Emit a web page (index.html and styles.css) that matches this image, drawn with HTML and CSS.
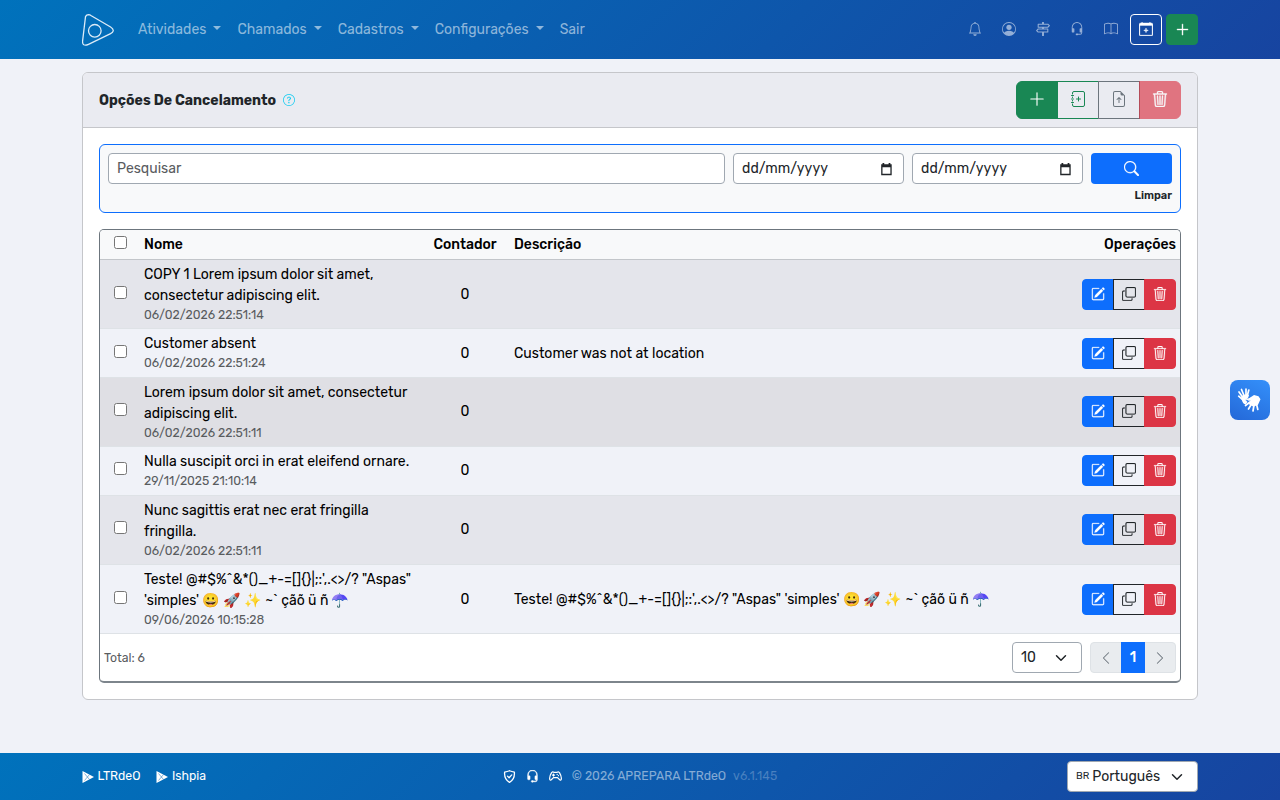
FILE: index.html
```html
<!DOCTYPE html>
<html lang="pt-BR">
<head>
    <meta charset="UTF-8">
    <meta name="viewport" content="width=device-width, initial-scale=1.0">
    <title>Opções De Cancelamento</title>
    <link rel="stylesheet" href="styles.css">
</head>
<body>
    <svg class="sprite" xmlns="http://www.w3.org/2000/svg">
        <symbol id="bell" viewBox="0 0 16 16"><path d="M8 16a2 2 0 0 0 2-2H6a2 2 0 0 0 2 2M8 1.918l-.797.161A4 4 0 0 0 4 6c0 .628-.134 2.197-.459 3.742-.16.767-.376 1.566-.663 2.258h10.244c-.287-.692-.502-1.49-.663-2.258C12.134 8.197 12 6.628 12 6a4 4 0 0 0-3.203-3.92zM14.22 12c.223.447.481.801.78 1H1c.299-.199.557-.553.78-1C2.68 10.2 3 6.88 3 6c0-2.42 1.72-4.44 4.005-4.901a1 1 0 1 1 1.99 0A5 5 0 0 1 13 6c0 .88.32 4.2 1.22 6"/></symbol>
        <symbol id="person" viewBox="0 0 16 16"><path d="M11 6a3 3 0 1 1-6 0 3 3 0 0 1 6 0"/><path fill-rule="evenodd" d="M0 8a8 8 0 1 1 16 0A8 8 0 0 1 0 8m8-7a7 7 0 0 0-5.468 11.37C3.242 11.226 4.805 10 8 10s4.757 1.225 5.468 2.37A7 7 0 0 0 8 1"/></symbol>
        <symbol id="signpost" viewBox="0 0 16 16"><path fill="none" stroke="currentColor" stroke-width="1.2" stroke-linejoin="round" d="M7.5 2.5V.5h1v2M2.5 2.5h11l1.8 1.75-1.8 1.75h-11zM13.5 8h-11L.7 9.75l1.8 1.75h11zM7.5 6v2M8.5 6v2M7.5 11.5v4h1v-4"/></symbol>
        <symbol id="headset" viewBox="0 0 16 16"><path d="M8 1a5 5 0 0 0-5 5v1h1a1 1 0 0 1 1 1v3a1 1 0 0 1-1 1H3a1 1 0 0 1-1-1V6a6 6 0 1 1 12 0v6a2.5 2.5 0 0 1-2.5 2.5H9.366a1 1 0 0 1-.866.5h-1a1 1 0 1 1 0-2h1a1 1 0 0 1 .866.5H11.5A1.5 1.5 0 0 0 13 12h-1a1 1 0 0 1-1-1V8a1 1 0 0 1 1-1h1V6a5 5 0 0 0-5-5"/></symbol>
        <symbol id="book" viewBox="0 0 16 16"><path d="M1 2.828c.885-.37 2.154-.769 3.388-.893 1.33-.134 2.458.063 3.112.752v9.746c-.935-.53-2.12-.603-3.213-.493-1.18.12-2.37.461-3.287.811zm7.5-.141c.654-.689 1.782-.886 3.112-.752 1.234.124 2.503.523 3.388.893v9.923c-.918-.35-2.107-.692-3.287-.81-1.094-.111-2.278-.039-3.213.492zM8 1.783C7.015.936 5.587.81 4.287.94c-1.514.153-3.042.672-3.994 1.105A.5.5 0 0 0 0 2.5v11a.5.5 0 0 0 .707.455c.882-.4 2.303-.881 3.68-1.02 1.409-.142 2.59.087 3.223.877a.5.5 0 0 0 .78 0c.633-.79 1.814-1.019 3.222-.877 1.378.139 2.8.62 3.681 1.02A.5.5 0 0 0 16 13.5v-11a.5.5 0 0 0-.293-.455c-.952-.433-2.48-.952-3.994-1.105C10.413.809 8.985.936 8 1.783"/></symbol>
        <symbol id="calendar-plus" viewBox="0 0 16 16"><path d="M8 7a.5.5 0 0 1 .5.5V9H10a.5.5 0 0 1 0 1H8.5v1.5a.5.5 0 0 1-1 0V10H6a.5.5 0 0 1 0-1h1.5V7.5A.5.5 0 0 1 8 7"/><path d="M3.5 0a.5.5 0 0 1 .5.5V1h8V.5a.5.5 0 0 1 1 0V1h1a2 2 0 0 1 2 2v11a2 2 0 0 1-2 2H2a2 2 0 0 1-2-2V3a2 2 0 0 1 2-2h1V.5a.5.5 0 0 1 .5-.5M1 4v10a1 1 0 0 0 1 1h12a1 1 0 0 0 1-1V4z"/></symbol>
        <symbol id="plus" viewBox="0 0 16 16"><path d="M8 2a.5.5 0 0 1 .5.5v5h5a.5.5 0 0 1 0 1h-5v5a.5.5 0 0 1-1 0v-5h-5a.5.5 0 0 1 0-1h5v-5A.5.5 0 0 1 8 2"/></symbol>
        <symbol id="journal-plus" viewBox="0 0 16 16"><path fill="none" stroke="currentColor" stroke-linecap="round" d="M2.5 3V2A1.5 1.5 0 0 1 4 .5h9A1.5 1.5 0 0 1 14.500 2v12a1.500 1.500 0 0 1-1.500 1.500H4A1.500 1.500 0 0 1 2.500 14v-1M1.500 4.500h2M1.500 8h2M1.500 11.500h2M2.500 6v.5M2.500 9.500v.5M8.500 6v4M6.500 8h4"/></symbol>
        <symbol id="file-up" viewBox="0 0 16 16"><path d="M8.500 11.500a.5.5 0 0 1-1 0V7.707L6.354 8.854a.5.5 0 1 1-.708-.708l2-2a.5.5 0 0 1 .708 0l2 2a.5.5 0 0 1-.708.708L8.500 7.707z"/><path d="M14 14V4.500L9.500 0H4a2 2 0 0 0-2 2v12a2 2 0 0 0 2 2h8a2 2 0 0 0 2-2M9.500 3A1.500 1.500 0 0 0 11 4.500h2V14a1 1 0 0 1-1 1H4a1 1 0 0 1-1-1V2a1 1 0 0 1 1-1h5.500z"/></symbol>
        <symbol id="trash" viewBox="0 0 16 16"><path d="M6.5 1h3a.5.5 0 0 1 .5.5v1H6v-1a.5.5 0 0 1 .5-.5M11 2.5v-1A1.5 1.5 0 0 0 9.5 0h-3A1.5 1.5 0 0 0 5 1.500v1H1.5a.5.5 0 0 0 0 1h.538l.853 10.660A2 2 0 0 0 4.885 16h6.230a2 2 0 0 0 1.994-1.840l.853-10.660h.538a.5.5 0 0 0 0-1zm1.958 1-.846 10.580a1 1 0 0 1-.997.920h-6.230a1 1 0 0 1-.997-.920L3.042 3.500zm-7.487 1a.5.5 0 0 1 .528.470l.5 8.500a.5.5 0 0 1-.998.060L5 5.030a.5.5 0 0 1 .470-.530Zm5.058 0a.5.5 0 0 1 .470.530l-.5 8.500a.5.5 0 1 1-.998-.060l.5-8.500a.5.5 0 0 1 .528-.470M8 4.500a.5.5 0 0 1 .5.5v8.500a.5.5 0 0 1-1 0V5a.5.5 0 0 1 .5-.5"/></symbol>
        <symbol id="edit" viewBox="0 0 16 16"><path d="M15.502 1.940a.5.5 0 0 1 0 .706L14.459 3.690l-2-2L13.502.646a.5.5 0 0 1 .707 0l1.293 1.293zm-1.750 2.456-2-2L4.939 9.210a.5.5 0 0 0-.121.196l-.805 2.414a.25.25 0 0 0 .316.316l2.414-.805a.5.5 0 0 0 .196-.120l6.813-6.814z"/><path fill-rule="evenodd" d="M1 13.500A1.500 1.500 0 0 0 2.500 15h11a1.500 1.500 0 0 0 1.500-1.500v-6a.5.5 0 0 0-1 0v6a.5.5 0 0 1-.5.5h-11a.5.5 0 0 1-.5-.5v-11a.5.5 0 0 1 .5-.5H9a.5.5 0 0 0 0-1H2.500A1.500 1.500 0 0 0 1 2.500z"/></symbol>
        <symbol id="copy" viewBox="0 0 16 16"><path fill-rule="evenodd" d="M4 2a2 2 0 0 1 2-2h8a2 2 0 0 1 2 2v8a2 2 0 0 1-2 2H6a2 2 0 0 1-2-2zm2-1a1 1 0 0 0-1 1v8a1 1 0 0 0 1 1h8a1 1 0 0 0 1-1V2a1 1 0 0 0-1-1zM2 5a1 1 0 0 0-1 1v8a1 1 0 0 0 1 1h8a1 1 0 0 0 1-1v-1h1v1a2 2 0 0 1-2 2H2a2 2 0 0 1-2-2V6a2 2 0 0 1 2-2h1v1z"/></symbol>
        <symbol id="search" viewBox="0 0 16 16"><path d="M11.742 10.344a6.5 6.5 0 1 0-1.397 1.398h-.001q.044.06.098.115l3.850 3.850a1 1 0 0 0 1.415-1.414l-3.850-3.850a1 1 0 0 0-.115-.1zM12 6.500a5.500 5.500 0 1 1-11 0 5.500 5.500 0 0 1 11 0"/></symbol>
        <symbol id="question" viewBox="0 0 16 16"><path d="M8 15A7 7 0 1 1 8 1a7 7 0 0 1 0 14m0 1A8 8 0 1 0 8 0a8 8 0 0 0 0 16"/><path d="M5.255 5.786a.237.237 0 0 0 .241.247h.825c.138 0 .248-.113.266-.25.09-.656.54-1.134 1.342-1.134.686 0 1.314.343 1.314 1.168 0 .635-.374.927-.965 1.371-.673.489-1.206 1.06-1.168 1.987l.003.217a.25.25 0 0 0 .25.246h.811a.25.25 0 0 0 .25-.25v-.105c0-.718.273-.927 1.01-1.486.609-.463 1.244-.977 1.244-2.056 0-1.511-1.276-2.241-2.673-2.241-1.267 0-2.655.59-2.75 2.286m1.557 5.763c0 .533.425.927 1.01.927.609 0 1.028-.394 1.028-.927 0-.552-.42-.94-1.029-.94-.584 0-1.009.388-1.009.94"/></symbol>
        <symbol id="date" viewBox="0 0 16 16"><path fill-rule="evenodd" d="M4 1h2v1.500h5V1h2v1.500h1.500V15H2.500V2.500H4zM4 6v7.500h9V6z"/></symbol>
        <symbol id="down" viewBox="0 0 16 16"><path fill="none" stroke="currentColor" stroke-width="2" stroke-linecap="round" stroke-linejoin="round" d="m2 5 6 6 6-6"/></symbol>
        <symbol id="left" viewBox="0 0 16 16"><path fill="none" stroke="currentColor" stroke-width="1.2" stroke-linecap="round" stroke-linejoin="round" d="m11 2-6 6 6 6"/></symbol>
        <symbol id="right" viewBox="0 0 16 16"><path fill="none" stroke="currentColor" stroke-width="1.2" stroke-linecap="round" stroke-linejoin="round" d="m5 2 6 6-6 6"/></symbol>
        <symbol id="play" viewBox="0 0 12 12"><path d="M.5 0 12 6 .5 12z"/><path class="play-cut" d="m2.500 2.500 5 6M2.500 9.500l5-6"/></symbol>
        <symbol id="shield" viewBox="0 0 16 16"><path fill="none" stroke="currentColor" stroke-width="1.600" stroke-linecap="round" stroke-linejoin="round" d="M8 .9c2 .9 4 1.400 6 1.700C14.500 8.500 12 13 8 15.200 4 13 1.500 8.500 2 2.600 4 2.300 6 1.800 8 .9M5.500 7.500l2 2 3.300-3.500"/></symbol>
        <symbol id="gamepad" viewBox="0 0 16 16"><path fill="none" stroke="currentColor" stroke-width="1.500" stroke-linecap="round" stroke-linejoin="round" d="M3 3.500C4 2 5 2 6 2.800h4c1-.8 2-.8 3 .7 1.500 2.500 2.500 6.500 2 8.200-.6 1.300-2 .8-4.500-2.200h-5C3 12.500 1.600 13 1 11.700c-.5-1.700.5-5.700 2-8.200M5.500 5v2.500M4.300 6.200h2.500M10 5.500h.1M11.500 7h.1"/></symbol>
    </svg>

    <header class="navbar">
        <div class="container navbar-inner">
            <svg class="logo" viewBox="0 0 32 32"><path d="M3.500 2.600Q4.500.8 6.500.7q1.400 0 2.800 1L28.600 13q3 1.900 2.600 4-.3 1.500-2.600 2.600L6.500 30.300q-3 1.400-4.700.5-1.500-.9-1.200-3.800z"/><circle cx="12.800" cy="16.800" r="6.300"/></svg>
            <nav class="menu">
                <a class="menu-link" href="#">Atividades<i class="caret"></i></a>
                <a class="menu-link" href="#">Chamados<i class="caret"></i></a>
                <a class="menu-link" href="#">Cadastros<i class="caret"></i></a>
                <a class="menu-link" href="#">Configurações<i class="caret"></i></a>
                <a class="menu-link" href="#">Sair</a>
            </nav>
            <div class="shortcuts">
                <svg class="icon"><use href="#bell"/></svg>
                <svg class="icon"><use href="#person"/></svg>
                <svg class="icon"><use href="#signpost"/></svg>
                <svg class="icon"><use href="#headset"/></svg>
                <svg class="icon"><use href="#book"/></svg>
            </div>
            <div class="quick">
                <button class="quick-btn quick-outline"><svg class="icon"><use href="#calendar-plus"/></svg></button>
                <button class="quick-btn quick-success"><svg class="icon icon-15"><use href="#plus"/></svg></button>
            </div>
        </div>
    </header>

    <main class="container card">
        <div class="card-header">
            <h1 class="title">Opções De Cancelamento</h1>
            <svg class="icon help"><use href="#question"/></svg>
            <div class="toolbar">
                <button class="tool tool-add"><svg class="icon icon-18"><use href="#plus"/></svg></button>
                <button class="tool tool-journal"><svg class="icon icon-16"><use href="#journal-plus"/></svg></button>
                <button class="tool tool-file"><svg class="icon icon-16"><use href="#file-up"/></svg></button>
                <button class="tool tool-delete"><svg class="icon icon-16"><use href="#trash"/></svg></button>
            </div>
        </div>
        <div class="card-body">
            <form class="filter">
                <div class="filter-row">
                    <input class="field search-field" type="text" placeholder="Pesquisar">
                    <div class="field date-field"><span>dd/mm/yyyy</span><svg class="icon"><use href="#date"/></svg></div>
                    <div class="field date-field"><span>dd/mm/yyyy</span><svg class="icon"><use href="#date"/></svg></div>
                    <button class="search-btn" type="button"><svg class="icon icon-15"><use href="#search"/></svg></button>
                </div>
                <a class="clear" href="#">Limpar</a>
            </form>

            <div class="table-box">
                <table class="table">
                    <thead>
                        <tr>
                            <th class="col-check"><input type="checkbox"></th>
                            <th class="col-name">Nome</th>
                            <th class="col-count">Contador</th>
                            <th>Descrição</th>
                            <th class="col-ops">Operações</th>
                        </tr>
                    </thead>
                    <tbody>
                        <tr>
                            <td class="col-check"><input type="checkbox"></td>
                            <td>COPY 1 Lorem ipsum dolor sit amet,<br>consectetur adipiscing elit.<small>06/02/2026 22:51:14</small></td>
                            <td class="col-count">0</td>
                            <td></td>
                            <td class="col-ops"><div class="ops"><button class="op op-edit"><svg class="icon"><use href="#edit"/></svg></button><button class="op op-copy"><svg class="icon"><use href="#copy"/></svg></button><button class="op op-delete"><svg class="icon"><use href="#trash"/></svg></button></div></td>
                        </tr>
                        <tr>
                            <td class="col-check"><input type="checkbox"></td>
                            <td>Customer absent<small>06/02/2026 22:51:24</small></td>
                            <td class="col-count">0</td>
                            <td>Customer was not at location</td>
                            <td class="col-ops"><div class="ops"><button class="op op-edit"><svg class="icon"><use href="#edit"/></svg></button><button class="op op-copy"><svg class="icon"><use href="#copy"/></svg></button><button class="op op-delete"><svg class="icon"><use href="#trash"/></svg></button></div></td>
                        </tr>
                        <tr class="hover">
                            <td class="col-check"><input type="checkbox"></td>
                            <td>Lorem ipsum dolor sit amet, consectetur<br>adipiscing elit.<small>06/02/2026 22:51:11</small></td>
                            <td class="col-count">0</td>
                            <td></td>
                            <td class="col-ops"><div class="ops"><button class="op op-edit"><svg class="icon"><use href="#edit"/></svg></button><button class="op op-copy"><svg class="icon"><use href="#copy"/></svg></button><button class="op op-delete"><svg class="icon"><use href="#trash"/></svg></button></div></td>
                        </tr>
                        <tr>
                            <td class="col-check"><input type="checkbox"></td>
                            <td>Nulla suscipit orci in erat eleifend ornare.<small>29/11/2025 21:10:14</small></td>
                            <td class="col-count">0</td>
                            <td></td>
                            <td class="col-ops"><div class="ops"><button class="op op-edit"><svg class="icon"><use href="#edit"/></svg></button><button class="op op-copy"><svg class="icon"><use href="#copy"/></svg></button><button class="op op-delete"><svg class="icon"><use href="#trash"/></svg></button></div></td>
                        </tr>
                        <tr>
                            <td class="col-check"><input type="checkbox"></td>
                            <td>Nunc sagittis erat nec erat fringilla<br>fringilla.<small>06/02/2026 22:51:11</small></td>
                            <td class="col-count">0</td>
                            <td></td>
                            <td class="col-ops"><div class="ops"><button class="op op-edit"><svg class="icon"><use href="#edit"/></svg></button><button class="op op-copy"><svg class="icon"><use href="#copy"/></svg></button><button class="op op-delete"><svg class="icon"><use href="#trash"/></svg></button></div></td>
                        </tr>
                        <tr>
                            <td class="col-check"><input type="checkbox"></td>
                            <td>Teste! @#$%^&amp;*()_+-=[]{}|;:',.&lt;&gt;/? "Aspas"<br>'simples' 😀 🚀 ✨ ~` çãõ ü ñ ☂️<small>09/06/2026 10:15:28</small></td>
                            <td class="col-count">0</td>
                            <td>Teste! @#$%^&amp;*()_+-=[]{}|;:',.&lt;&gt;/? "Aspas" 'simples' 😀 🚀 ✨ ~` çãõ ü ñ ☂️</td>
                            <td class="col-ops"><div class="ops"><button class="op op-edit"><svg class="icon"><use href="#edit"/></svg></button><button class="op op-copy"><svg class="icon"><use href="#copy"/></svg></button><button class="op op-delete"><svg class="icon"><use href="#trash"/></svg></button></div></td>
                        </tr>
                    </tbody>
                </table>
                <div class="table-footer">
                    <span class="total">Total: 6</span>
                    <div class="select page-size">10<svg class="icon icon-12"><use href="#down"/></svg></div>
                    <div class="pager">
                        <span class="page"><svg class="icon"><use href="#left"/></svg></span>
                        <span class="page page-active">1</span>
                        <span class="page"><svg class="icon"><use href="#right"/></svg></span>
                    </div>
                </div>
            </div>
        </div>
    </main>

    <footer class="footer">
        <div class="container footer-inner">
            <div class="brands">
                <a class="brand" href="#"><svg class="icon icon-12"><use href="#play"/></svg>LTRdeO</a>
                <a class="brand" href="#"><svg class="icon icon-12"><use href="#play"/></svg>Ishpia</a>
            </div>
            <div class="legal">
                <svg class="icon icon-13"><use href="#shield"/></svg>
                <svg class="icon icon-13 bold"><use href="#headset"/></svg>
                <svg class="icon icon-13"><use href="#gamepad"/></svg>
                <span class="copyright">© 2026 APREPARA LTRdeO</span>
                <span class="version">v6.1.145</span>
            </div>
            <div class="select language"><span class="flag">BR</span>Português<svg class="icon icon-12"><use href="#down"/></svg></div>
        </div>
    </footer>

    <div class="vlibras">
        <svg viewBox="0 0 40 40">
            <g fill="none" stroke="#fff" stroke-linecap="round">
                <path stroke-width="1.700" d="M12.500 17 9 12M14 15.500 11.500 9.500M16 14.500V9M17.500 15l1.300-5M12 19l-3.300-2.800"/>
                <path stroke-width="1.700" d="m20 22-4.500 3.500M21.500 24 18.500 29M24 25l-1 6M26.500 24l1.300 5.500M21 18.500l-4 1"/>
            </g>
            <path fill="#fff" d="m11.500 16 6-2.500 1.500 2-1 2.500-2.500 2 2 2-2 2.500c-3-1-4-4-4-8.500M19.500 18l4.500-3 4.500 1.200 2 3-2.500 5.500-4.500 2-5-2.700 2-3.500-2.500.5z"/>
        </svg>
    </div>
</body>
</html>
```
FILE: styles.css
```css
* {
    box-sizing: border-box;
}
body {
    margin: 0;
    height: 100vh;
    display: flex;
    flex-direction: column;
    overflow: hidden;
    font-family: Rubik, Roboto, "Noto Color Emoji", sans-serif;
    font-size: 14px;
    line-height: 1.5;
    color: #212529;
    background: #f0f2f8;
}
button, input {
    font: inherit;
}
a {
    color: inherit;
    text-decoration: none;
}
.sprite {
    display: none;
}
.container {
    width: 1116px;
    margin: 0 auto;
}
.icon {
    display: block;
    width: 14px;
    height: 14px;
    fill: currentColor;
}
.icon-12 {
    width: 12px;
    height: 12px;
}
.icon-13 {
    width: 13px;
    height: 13px;
}
.icon-15 {
    width: 15px;
    height: 15px;
}
.icon-16 {
    width: 16px;
    height: 16px;
}
.icon-18 {
    width: 18px;
    height: 18px;
}

/* top bar */
.navbar {
    flex: none;
    height: 59px;
    background: linear-gradient(135deg, #0072bc, #1744a0);
}
.navbar-inner {
    display: flex;
    align-items: center;
    height: 59px;
}
.logo {
    width: 32px;
    height: 32px;
    margin-right: 16px;
    fill: none;
    stroke: #dcebf7;
    stroke-width: 1.3;
}
.menu {
    display: flex;
}
.menu-link {
    display: flex;
    align-items: center;
    padding: 0 8px;
    color: rgba(255, 255, 255, 0.55);
}
.caret {
    margin: -3px 0 0 7px;
    border-top: 4px solid;
    border-left: 4px solid transparent;
    border-right: 4px solid transparent;
}
.shortcuts {
    display: flex;
    gap: 20px;
    margin: -2px 12px 0 auto;
    color: rgba(255, 255, 255, 0.55);
}
.op .icon {
    stroke: currentColor;
    stroke-width: 0.25;
}
.quick {
    display: flex;
    gap: 4px;
}
.quick-btn {
    display: flex;
    align-items: center;
    justify-content: center;
    width: 32px;
    height: 31px;
    padding: 0 0 1px;
    border: 1px solid #fff;
    border-radius: 4px;
    color: #fff;
    background: none;
}
.quick-btn .icon {
    stroke: currentColor;
    stroke-width: 0.4;
}
.quick-success {
    border-color: #198754;
    background: #198754;
}

/* card */
.card {
    margin-top: 13px;
    height: 628px;
    background: #fff;
    border: 1px solid #c5c6ca;
    border-radius: 6px;
}
.card-header {
    display: flex;
    align-items: center;
    height: 55px;
    padding: 0 16px;
    background: #eaebf1;
    border-bottom: 1px solid #c5c6ca;
    border-radius: 5px 5px 0 0;
}
.title {
    margin: 0;
    font-size: 14px;
    font-weight: 700;
}
.help {
    width: 12px;
    height: 12px;
    margin-left: 7px;
    color: #0dcaf0;
}
.toolbar {
    display: flex;
    margin-left: auto;
}
.tool {
    display: flex;
    align-items: center;
    justify-content: center;
    width: 42px;
    height: 38px;
    margin-left: -1px;
    padding: 0 0 2px;
    border: 1px solid #198754;
    background: none;
}
.tool-add {
    margin-left: 0;
    border-radius: 6px 0 0 6px;
    background: #198754;
    color: #fff;
}
.tool-journal {
    color: #198754;
}
.tool-file {
    color: #6c757d;
    border-color: #6c757d;
}
.tool-delete {
    border-color: #dc3545;
    border-radius: 0 6px 6px 0;
    background: #dc3545;
    color: #fff;
    opacity: 0.65;
}
.tool-delete .icon {
    stroke: #fff;
    stroke-width: 0.4;
}
.card-body {
    padding: 16px;
}

/* filter */
.filter {
    height: 69px;
    padding: 8px;
    border: 1px solid #0d6efd;
    border-radius: 6px;
    background: #f8f9fa;
}
.filter-row {
    display: flex;
    gap: 8px;
}
.field {
    height: 31px;
    padding: 0 8px;
    border: 1px solid #a0a8b1;
    border-radius: 4px;
    background: #fff;
    color: #212529;
}
.search-field {
    flex: 1;
    min-width: 0;
}
.search-field::placeholder {
    color: #595c5f;
}
.date-field {
    display: flex;
    align-items: center;
    justify-content: space-between;
    width: 171px;
    padding-right: 10px;
    letter-spacing: 0.1px;
}
.search-btn {
    display: flex;
    align-items: center;
    justify-content: center;
    width: 81px;
    height: 31px;
    padding: 0 0 1px;
    border: 0;
    border-radius: 4px;
    background: #0d6efd;
    color: #fff;
}
.search-btn .icon {
    stroke: #fff;
    stroke-width: 0.3;
}
.clear {
    display: block;
    margin-top: 4px;
    text-align: right;
    font-size: 11px;
    font-weight: 600;
}

/* table */
.table-box {
    height: 454px;
    margin-top: 16px;
    border: 1px solid #6c757d;
    border-bottom: 2px solid #7d858c;
    border-radius: 5px;
    overflow: hidden;
}
.table {
    width: 100%;
    table-layout: fixed;
    border-collapse: separate;
    border-spacing: 0;
    color: #000;
    white-space: nowrap;
}
.table th, .table td {
    padding: 4px;
    text-align: left;
    vertical-align: middle;
    border-bottom: 1px solid #dee2e6;
}
.table th {
    height: 30px;
    font-weight: 500;
    background: #f8f9fa;
    border-bottom-color: #c3c6ca;
}
.table td {
    background: #f0f2f8;
}
.table tbody tr:nth-child(odd) td {
    background: #e4e5eb;
}
.table tbody tr.hover td {
    background: #dfdfe4;
}
.table small {
    display: block;
    font-size: 12.25px;
    color: #595c5f;
}
.table .col-check {
    width: 40px;
    text-align: center;
    line-height: 1;
}
.col-check input {
    display: block;
    width: 13px;
    height: 13px;
    margin: -4px auto 0;
}
.col-name {
    width: 280px;
}
.table .col-count {
    width: 90px;
    text-align: center;
}
.table .col-ops {
    width: 110px;
    text-align: right;
}
.ops {
    display: flex;
    justify-content: flex-end;
}
.op {
    display: flex;
    justify-content: center;
    width: 32px;
    height: 31px;
    padding: 7px 0 0;
    border: 1px solid #0d6efd;
    border-radius: 4px 0 0 4px;
    background: #0d6efd;
    color: #fff;
}
.op-copy {
    margin-left: -1px;
    border-color: #212529;
    border-radius: 0;
    background: none;
    color: #212529;
}
.op-delete {
    margin-left: -1px;
    border-color: #dc3545;
    border-radius: 0 4px 4px 0;
    background: #dc3545;
}
.table-footer {
    display: flex;
    align-items: center;
    height: 47px;
    padding: 0 4px;
}
.total {
    margin-right: auto;
    font-size: 12.25px;
    color: #595c5f;
}
.select {
    display: flex;
    align-items: center;
    height: 31px;
    padding: 0 8px;
    border: 1px solid #a0a8b1;
    border-radius: 4px;
    background: #fff;
    color: #212529;
}
.select .icon {
    margin-left: auto;
}
.page-size {
    width: 70px;
    padding-right: 14px;
}
.pager {
    display: flex;
    width: 86px;
    height: 31px;
    margin-left: 8px;
    border: 1px solid #dee2e6;
    border-radius: 4px;
    background: #e9ecef;
    color: #6c757d;
}
.page {
    flex: 1;
    display: flex;
    align-items: center;
    justify-content: center;
}
.page-active {
    flex: none;
    width: 24px;
    margin: -1px 0;
    background: #0d6efd;
    color: #fff;
    font-weight: 500;
}

/* footer */
.footer {
    flex: none;
    height: 47px;
    margin-top: auto;
    background: linear-gradient(135deg, #0072bc, #1744a0);
    font-size: 12.25px;
}
.footer-inner {
    display: grid;
    grid-template-columns: 1fr auto 1fr;
    align-items: center;
    height: 47px;
}
.brands {
    display: flex;
    gap: 16px;
}
.brand {
    display: flex;
    align-items: center;
    gap: 3.5px;
    color: #fff;
}
.play-cut {
    fill: none;
    stroke: #0a68b5;
    stroke-width: 0.5;
}
.legal {
    display: flex;
    align-items: center;
    gap: 10px;
    color: #fff;
}
.bold {
    stroke: #fff;
    stroke-width: 0.6;
}
.copyright {
    color: rgba(255, 255, 255, 0.5);
}
.version {
    margin-left: -3px;
    color: rgba(255, 255, 255, 0.25);
}
.language {
    width: 131px;
    padding-right: 14px;
    justify-self: end;
    font-size: 14px;
}
.flag {
    margin-right: 3px;
    font-size: 10px;
}

/* accessibility widget */
.vlibras {
    position: absolute;
    top: 380px;
    right: 10px;
    width: 40px;
    height: 40px;
    border-radius: 8px;
    background: linear-gradient(25deg, #2468d8, #3490fa);
}
```
